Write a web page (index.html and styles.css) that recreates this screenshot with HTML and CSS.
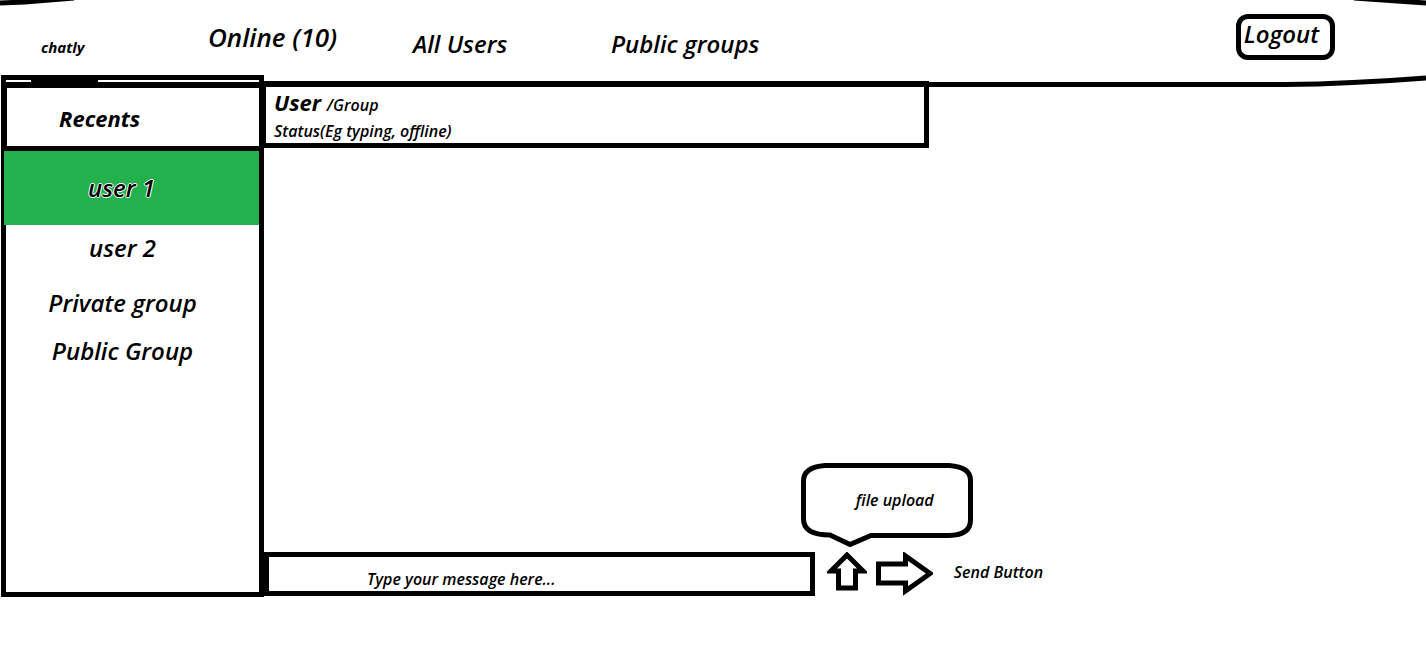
FILE: index.html
```html
<!DOCTYPE html>
<html lang="en">
<head>
<meta charset="utf-8">
<title>chatly</title>
<link rel="stylesheet" href="styles.css">
</head>
<body>
<header class="topbar">
  <svg class="frame" viewBox="0 0 1426 90" preserveAspectRatio="none" aria-hidden="true">
    <path d="M0 3 L25 2 L74 -2 M1354 -2 L1426 3 M262 84.500 H1285 Q1350 84 1426 78"/>
  </svg>
  <a class="brand" href="#">chatly</a>
  <nav class="nav">
    <a class="online" href="#">Online (10)</a>
    <a class="all" href="#">All Users</a>
    <a href="#">Public groups</a>
  </nav>
  <button class="logout" type="button">Logout</button>
</header>
<div class="workspace">
  <aside class="sidebar">
    <h2 class="recents">Recents</h2>
    <ul class="list">
      <li><a class="row active" href="#">user 1</a></li>
      <li><a class="row" href="#">user 2</a></li>
    </ul>
    <ul class="list groups">
      <li><a class="row" href="#">Private group</a></li>
      <li><a class="row" href="#">Public Group</a></li>
    </ul>
  </aside>
  <main class="chat">
    <section class="peer">
      <h1 class="name">User <span class="kind">/Group</span></h1>
      <p class="status">Status(Eg typing, offline)</p>
    </section>
    <form class="composer">
      <input class="message" type="text" placeholder="Type your message here..." aria-label="Message">
      <div class="upload">
        <div class="bubble" id="upload-tip">
          <svg viewBox="0 0 172 84" aria-hidden="true"><path d="M24 2.500 H148 Q169.500 4 169.500 17 V57 Q169.500 72 148 72.500 H70 L49 81.500 L29 72 Q2.500 72 2.500 56 V18 Q2.500 4 24 2.500 Z"/></svg>
          <span class="tip">file upload</span>
        </div>
        <button class="icon" type="button" aria-labelledby="upload-tip">
          <svg width="40" height="44" viewBox="0 0 40 44" aria-hidden="true"><path d="M20 3 L36 19 H28.500 V36 H11.500 V19 H4 Z"/></svg>
        </button>
      </div>
      <button class="icon send" type="submit">
        <svg width="58" height="44" viewBox="0 0 58 44" aria-hidden="true"><path d="M3.500 12 H30.500 V4 L55 21.500 L30.500 39 V31 H3.500 Z"/></svg>
        <span>Send Button</span>
      </button>
    </form>
  </main>
</div>
</body>
</html>
```
FILE: styles.css
```css
* { box-sizing: border-box; }

body {
  margin: 0;
  background: #fff;
  color: #000;
  font: italic 600 24px/32px "Open Sans", "Noto Sans", sans-serif;
}

a { color: inherit; text-decoration: none; }

button, input { color: inherit; font: inherit; }

svg path {
  fill: none;
  stroke: #000;
  stroke-width: 5px;
}

.topbar {
  position: relative;
  display: flex;
  align-items: flex-end;
  height: 81px;
  padding: 14px 91px 21px 41px;
}

.frame {
  position: absolute;
  top: 0;
  left: 0;
  width: 100%;
  height: 90px;
  pointer-events: none;
}

.brand {
  width: 167px;
  font-size: 15px;
  font-weight: 700;
  line-height: 26px;
}

.nav {
  display: grid;
  grid-template-columns: 205px 198px auto;
  align-items: end;
  align-self: stretch;
}

.online { align-self: center; font-size: 26px; }

.logout {
  width: 99px;
  height: 46px;
  margin-left: auto;
  padding: 0 8px 6px 0;
  border: 5px solid #000;
  border-radius: 12px;
  background: #fff;
  line-height: 30px;
}

.workspace {
  display: flex;
  min-height: calc(100vh - 145px);
}

.sidebar {
  position: relative;
  flex: 0 0 263px;
  margin: -6px 0 0 1px;
  padding-top: 2px;
  border: 5px solid #000;
  background: #fff;
}

.sidebar::before {
  content: "";
  position: absolute;
  top: 0;
  left: 25px;
  width: 67px;
  height: 2px;
  background: #000;
}

.recents {
  height: 69px;
  margin: 0;
  padding: 14px 0 0 52px;
  border: solid #000;
  border-width: 6px 0 5px 1px;
  font-size: 22px;
}

.list {
  margin: 0 0 8px;
  padding: 0;
  list-style: none;
}

.row {
  display: block;
  padding-right: 20px;
  line-height: 46px;
  text-align: center;
}

.groups .row { line-height: 48px; }

.list .active {
  margin-left: -2px;
  background: #22b14c;
  line-height: 74px;
  text-shadow: 1px 0 #fff, -1px 0 #fff, 0 1px #fff, 0 -1px #fff;
}

.chat {
  display: flex;
  flex: 1;
  flex-direction: column;
  justify-content: space-between;
  padding-bottom: 1px;
}

.peer {
  width: 57.2%;
  min-width: 300px;
  height: 67px;
  padding: 2px 8px 0;
  border: solid #000;
  border-width: 6px 5px 5px 2px;
}

.name {
  margin: 0;
  font-size: 22px;
  font-weight: 700;
  line-height: 26px;
}

.kind { font-size: 16px; font-weight: 600; }

.status {
  margin: 0;
  font-size: 16px;
  line-height: 26px;
}

.composer {
  display: flex;
  align-items: center;
  font-size: 16px;
}

.message {
  width: 47.4%;
  height: 44px;
  margin-right: 12px;
  padding: 10px 8px 0 98px;
  border: 5px solid #000;
  border-radius: 0;
  background: #fff;
}

.message::placeholder { color: #000; opacity: 1; }

.upload { position: relative; }

.icon {
  display: flex;
  align-items: center;
  padding: 0;
  border: 0;
  background: none;
}

.bubble {
  position: absolute;
  bottom: 49px;
  left: -26px;
  width: 172px;
  height: 84px;
}

.bubble svg { display: block; width: 100%; height: 100%; }

.tip {
  position: absolute;
  inset: 0 0 10px 16px;
  display: grid;
  place-items: center;
}

.send {
  gap: 21px;
  margin-left: 8px;
  line-height: 24px;
}

.send span { padding-bottom: 4px; }
```
